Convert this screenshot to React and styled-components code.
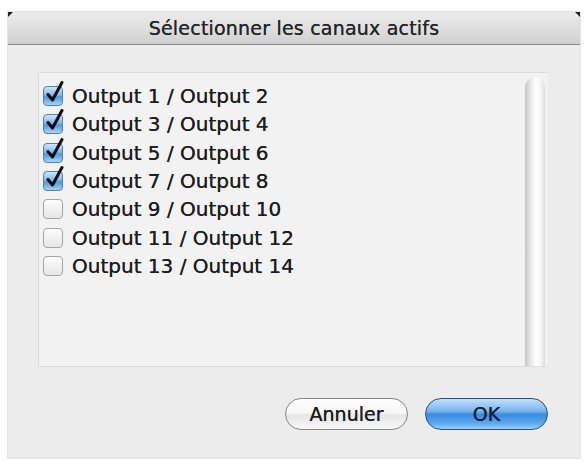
import React from "react";
import styled, { createGlobalStyle } from "styled-components";

const Global = createGlobalStyle`
  html, body { margin: 0; padding: 0; background: #ffffff; }
  body { font-family: "DejaVu Sans", "Liberation Sans", sans-serif; }
`;

const Page = styled.div`
  padding: 12px 4px 7px 8px;
`;

const Window = styled.div`
  position: relative;
  height: 446px;
  display: flex;
  flex-direction: column;
  background: #ececec;
  box-shadow: 0 0 0 1px #e4e4e4;
`;

const TitleBar = styled.div`
  height: 32px;
  display: flex;
  align-items: center;
  justify-content: center;
  background: linear-gradient(#ececec, #dedede 55%, #cfcfcf);
  border-bottom: 1px solid #8d8d8d;
  font-size: 19px;
  color: #262626;
  letter-spacing: 0.2px;
  text-shadow: 0 0 0.4px #262626;
`;

const Corner = styled.span`
  position: absolute;
  top: 0;
  ${(p) => (p.$side === "left" ? "left: 0;" : "right: 0;")}
  width: 0;
  height: 0;
  border-top: 5px solid #222;
  ${(p) =>
    p.$side === "left"
      ? "border-right: 5px solid transparent;"
      : "border-left: 5px solid transparent;"}
`;

const Body = styled.div`
  flex: 1;
  display: flex;
  flex-direction: column;
  padding: 27px 32px 28px 30px;
`;

const ListBox = styled.div`
  height: 293px;
  display: flex;
  background: #f2f2f2;
  border: 1px solid #dcdcdc;
  border-right: none;
`;

const List = styled.ul`
  flex: 1;
  list-style: none;
  margin: 0;
  padding: 9px 0 0 4px;
`;

const Row = styled.li`
  height: 28.3px;
  display: flex;
  align-items: center;
  gap: 9px;
  font-size: 20px;
  color: #1e1e1e;
  text-shadow: 0 0 0.5px #1e1e1e;
`;

const Box = styled.span`
  position: relative;
  width: 20px;
  height: 20px;
  border-radius: 4px;
  box-sizing: border-box;
  flex: none;
  ${(p) =>
    p.$checked
      ? `background: linear-gradient(#cfe6fb, #7fb8ee 45%, #4a97e3 55%, #a6d4fa);
         border: 1px solid #5a7fa8;`
      : `background: linear-gradient(#ffffff, #f1f1f1 50%, #e6e6e6);
         border: 1px solid #a4a4a4;`}
`;

const Check = styled.svg`
  position: absolute;
  left: 1px;
  top: -6px;
  width: 20px;
  height: 22px;
`;

const Scrollbar = styled.div`
  width: 20px;
  margin: 4px 3px 0 0;
  background: linear-gradient(90deg, #c6c6c6, #e9e9e9 30%, #ffffff 55%, #f4f4f4 80%, #dcdcdc);
  border-radius: 10px 10px 0 0;
`;

const Footer = styled.div`
  margin-top: auto;
  display: flex;
  justify-content: flex-end;
  gap: 17px;
`;

const Button = styled.button`
  width: 123px;
  height: 32px;
  border-radius: 16px;
  font-family: "DejaVu Sans", "Liberation Sans", sans-serif;
  font-size: 19px;
  color: #1d1d1d;
  text-shadow: 0 0 0.6px currentColor;
  cursor: pointer;
  ${(p) =>
    p.$primary
      ? `background: linear-gradient(#c3e0fb, #79b4ee 40%, #3a8ae0 52%, #5aa6ee 80%, #9ad0fa);
         border: 1.5px solid #2d4f7c;
         color: #0f1e33;`
      : `background: linear-gradient(#ffffff, #f6f6f6 45%, #e6e6e6 55%, #f8f8f8);
         border: 1.5px solid #858585;`}
`;

const items = [
  ["Output 1 / Output 2", true],
  ["Output 3 / Output 4", true],
  ["Output 5 / Output 6", true],
  ["Output 7 / Output 8", true],
  ["Output 9 / Output 10", false],
  ["Output 11 / Output 12", false],
  ["Output 13 / Output 14", false],
];

export default function App() {
  return (
    <>
      <Global />
      <Page>
        <Window>
          <Corner $side="left" />
          <Corner $side="right" />
          <TitleBar>Sélectionner les canaux actifs</TitleBar>
          <Body>
            <ListBox>
              <List>
                {items.map(([label, checked]) => (
                  <Row key={label}>
                    <Box $checked={checked}>
                      {checked && (
                        <Check viewBox="0 0 20 22">
                          <path
                            d="M3 13.5 L7.5 19 L17 1.5"
                            fill="none"
                            stroke="#0d0d0d"
                            strokeWidth="3"
                            strokeLinecap="round"
                            strokeLinejoin="round"
                          />
                        </Check>
                      )}
                    </Box>
                    {label}
                  </Row>
                ))}
              </List>
              <Scrollbar />
            </ListBox>
            <Footer>
              <Button>Annuler</Button>
              <Button $primary>OK</Button>
            </Footer>
          </Body>
        </Window>
      </Page>
    </>
  );
}
